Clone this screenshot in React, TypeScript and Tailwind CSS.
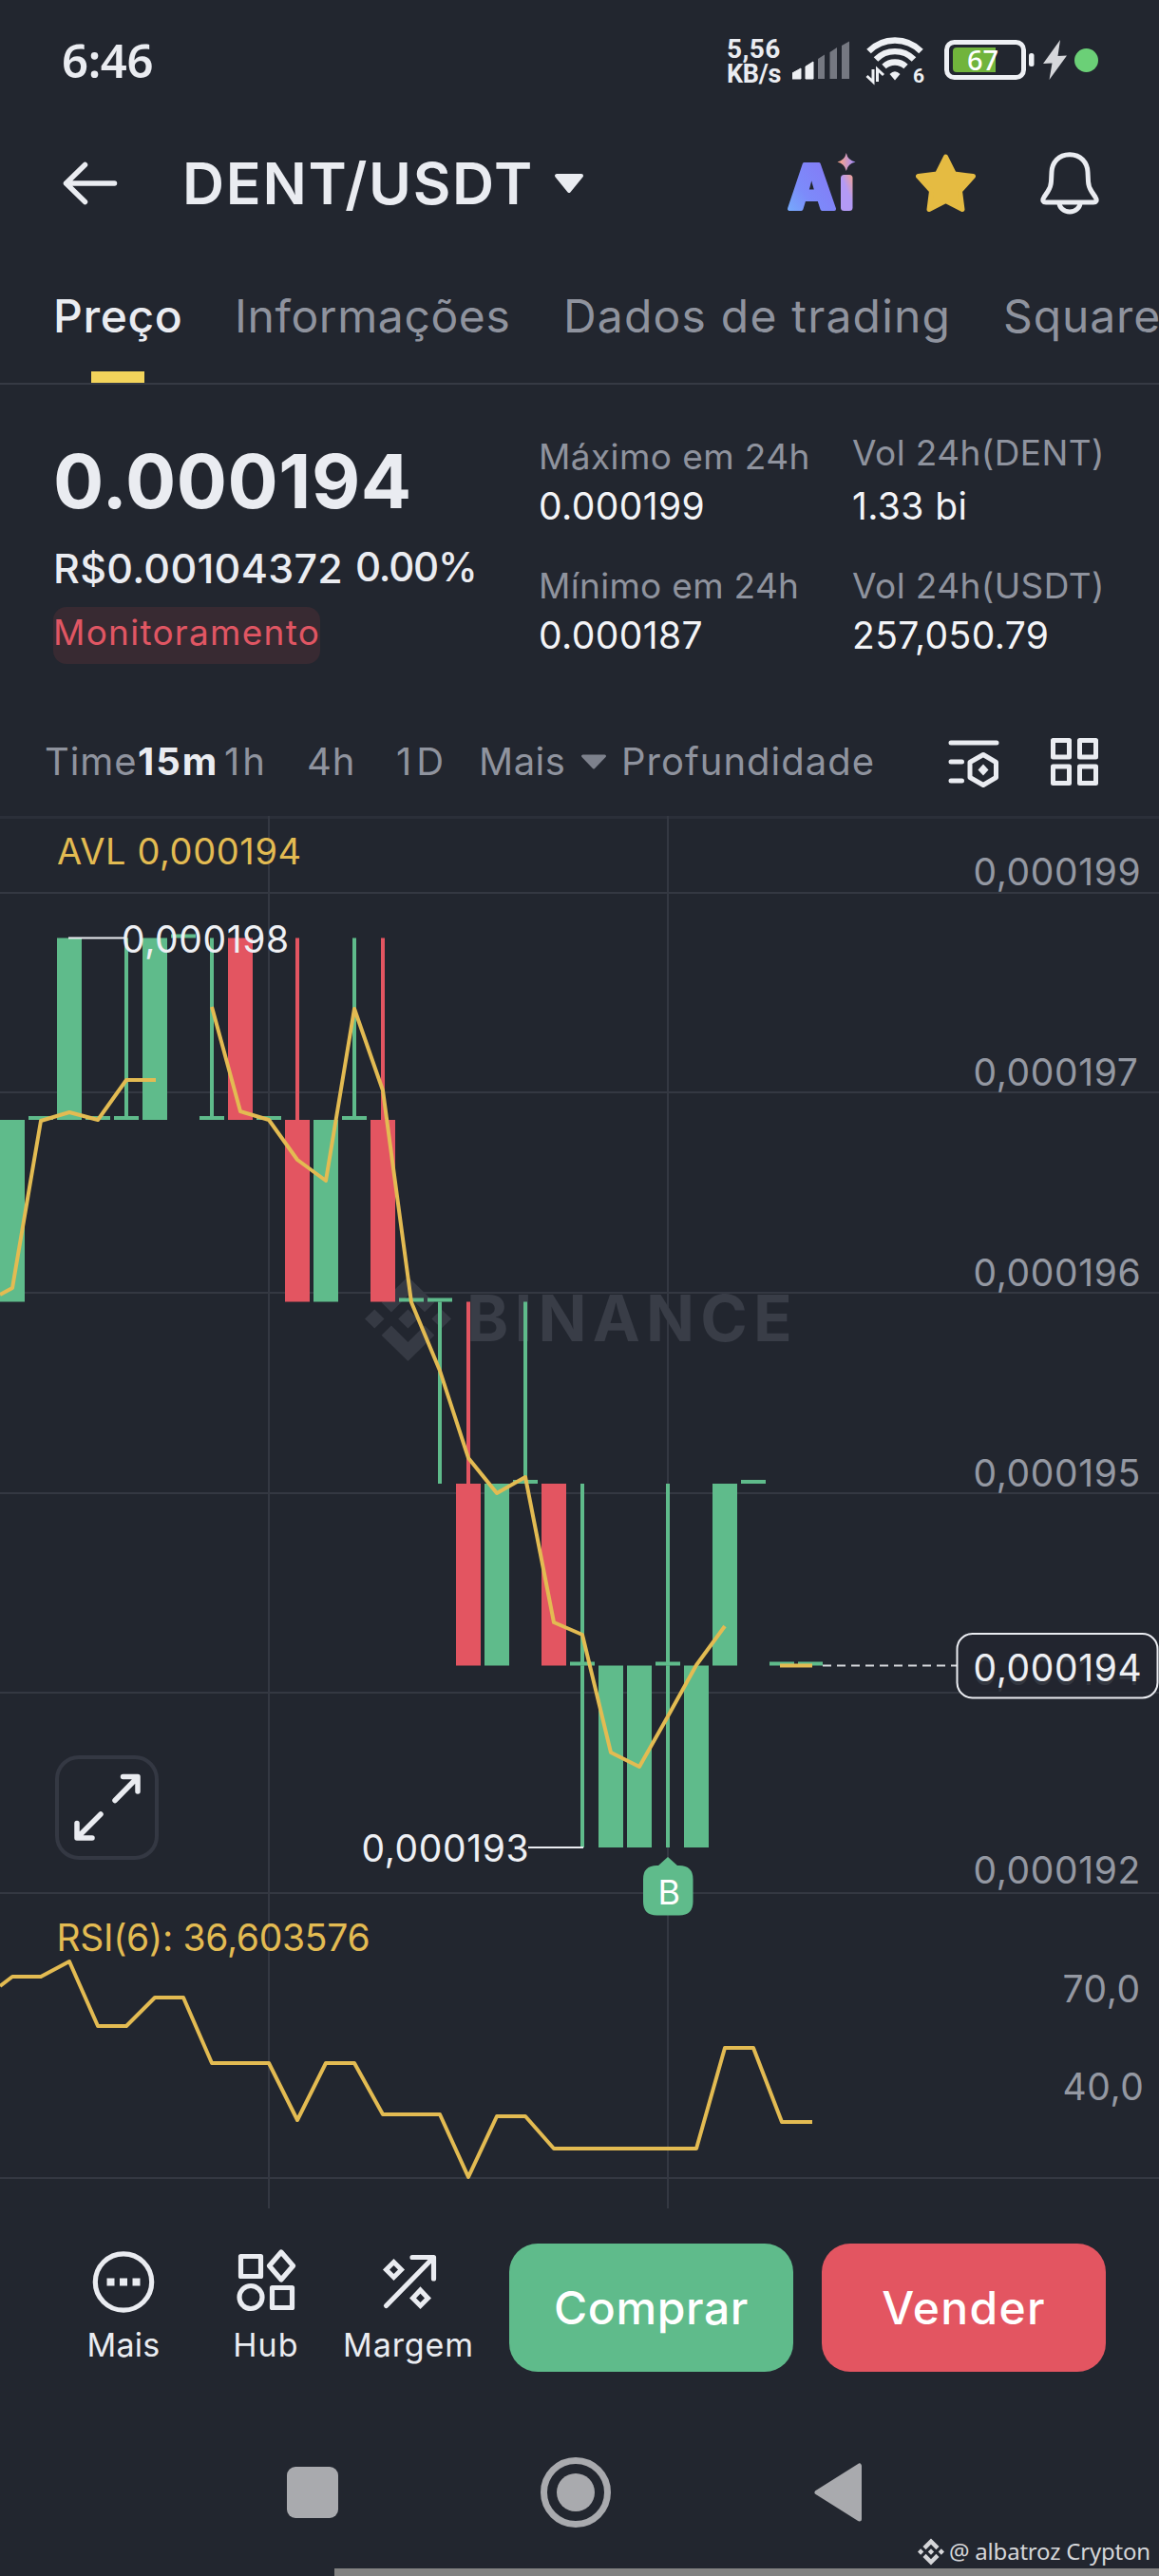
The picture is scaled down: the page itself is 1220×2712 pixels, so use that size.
import type { ReactNode } from 'react'
import { clsx } from 'clsx'

const UP = '#5fbb8b'
const DOWN = '#e35561'
const AVG = '#e3bb52'
const GRID = '#343842'

const LOGO_PATH =
    'M16.624 13.9202l2.7175 2.7154-7.353 7.353-7.353-7.352 2.7175-2.7164 4.6355 4.6595 4.6356-4.6595zm4.6366-4.6366L24 12l-2.7154 2.7164L18.5682 12l2.6924-2.7164zm-9.272.001l2.7163 2.6914-2.7164 2.7174v-.001L9.2721 12l2.7164-2.7154zm-9.2722-.001L5.4088 12l-2.6914 2.6924L0 12l2.7164-2.7164zM11.9885.0115l7.353 7.329-2.7174 2.7154-4.6356-4.6356-4.6355 4.6595-2.7174-2.7154 7.353-7.353z'

interface Candle {
    open: number
    close: number
    high?: number
    low?: number
}

// Prices in millionths, oldest first, one candle every 15 minutes
const candles: Candle[] = [
    { open: 196, close: 197 },
    { open: 197, close: 197 },
    { open: 197, close: 198 },
    { open: 197, close: 197 },
    { open: 197, close: 197, high: 198 },
    { open: 197, close: 198 },
    { open: 198, close: 198 },
    { open: 197, close: 197, high: 198 },
    { open: 198, close: 197 },
    { open: 197, close: 197 },
    { open: 197, close: 196, high: 198 },
    { open: 196, close: 197 },
    { open: 197, close: 197, high: 198 },
    { open: 197, close: 196, high: 198 },
    { open: 196, close: 196 },
    { open: 196, close: 196, low: 195 },
    { open: 195, close: 194, high: 196 },
    { open: 194, close: 195 },
    { open: 195, close: 195, high: 196 },
    { open: 195, close: 194 },
    { open: 194, close: 194, high: 195, low: 193 },
    { open: 193, close: 194 },
    { open: 193, close: 194 },
    { open: 194, close: 194, high: 195, low: 193 },
    { open: 193, close: 194 },
    { open: 194, close: 195 },
    { open: 195, close: 195 },
    { open: 194, close: 194 },
    { open: 194, close: 194 },
]

const candleX = (i: number) => 13 + i * 30
const priceY = (p: number) => 128.5 + (198 - p) * 191.5

const avgLines = [
    '0,504 13,497 43,321 73,312 103,320 133,278 164,278',
    '223,201 253,311 283,320 313,362 343,384 373,203 403,289 433,512 463,584 493,676 523,713 553,696 583,849 613,862 643,986 673,1001 703,948 733,894 763,853',
    '821,894.5 855,894.5',
]

const rsiLine =
    '0,1232 13,1222 43,1222 73,1206 103,1274 133,1274 163,1244 193,1244 223,1313 283,1313 313,1373 343,1313 373,1313 403,1367 463,1367 493,1433 523,1369 553,1369 583,1403 733,1403 763,1297 793,1297 823,1375 855,1375'

const gridRows = [81, 291, 502, 713, 923, 1134, 1434]

const axisLabels = [
    { text: '0,000199', x: 1024.5, y: 73 },
    { text: '0,000197', x: 1024.5, y: 284 },
    { text: '0,000196', x: 1024.5, y: 495 },
    { text: '0,000195', x: 1024.5, y: 705.5 },
    { text: '0,000194', x: 1024.5, y: 915 },
    { text: '0,000192', x: 1024.5, y: 1123.5 },
    { text: '70,0', x: 1118.5, y: 1248.5 },
    { text: '40,0', x: 1118.5, y: 1352 },
]

function StatusBar() {
    return (
        <div className="flex h-[126px] items-center justify-between pr-[64px] pl-[65px]">
            <span className="font-['Noto_Sans'] text-[49px] leading-none font-semibold tracking-[-0.4px]">6:46</span>
            <div className="flex items-center">
                <div className="mr-[12px] w-[57px] pt-[3px] font-['Roboto'] text-[28px] leading-[26px] font-bold whitespace-nowrap">
                    <div className="tracking-[0.4px]">5,56</div>
                    <div className="text-[27px] tracking-[-0.3px]">KB/s</div>
                </div>
                <svg width="60" height="42" viewBox="0 0 60 42" className="mr-[17px]">
                    <path d="M0 41V35L9 30V41ZM14 41V28L22 23V41Z" fill="#eef0f4" stroke="#eef0f4" strokeLinejoin="round" />
                    <path d="M27 41V20L34 15.500V41ZM39.500 41V13L47 8V41ZM52 41V6L60 1.500V41Z" fill="#757881" />
                </svg>
                <svg width="63" height="50" viewBox="0 0 63 50" className="mr-[20px] overflow-visible" fill="none" stroke="#eef0f4">
                    <path d="M3.500 16A38.500 38.500 0 0 1 58.500 16M11 24.500A28 28 0 0 1 51 24.500M19.500 32A17 17 0 0 1 42.500 32" strokeWidth="6.400" />
                    <path d="M25.500 40Q31 34.500 36.500 40L31 46.500Z" fill="#eef0f4" stroke="none" />
                    <path d="M8 35V48L1.500 42M12.500 48V35L19 41" strokeWidth="3" />
                    <text x="50" y="48.500" className="fill-[#eef0f4] font-['Roboto'] text-[21px] font-bold" stroke="none">6</text>
                </svg>
                <svg width="95" height="42" viewBox="0 0 95 42" className="mr-[9px]">
                    <rect x="2.500" y="2.500" width="81" height="37" rx="8" fill="none" stroke="#eef0f4" strokeWidth="5" />
                    <path d="M13 8H54V34H13Q9 34 9 30V12Q9 8 13 8Z" fill="#71b43c" />
                    <rect x="89" y="14" width="5.500" height="14" rx="2.500" fill="#eef0f4" />
                    <text x="24" y="32" className="fill-white font-['Noto_Sans'] text-[29px] font-medium">67</text>
                </svg>
                <svg width="26" height="42" viewBox="0 0 26 42" className="mr-[7px]">
                    <path d="M18 0L0 25L9.500 24.500L6.500 42L25 16.500L15.500 17Z" fill="#d6d7db" />
                </svg>
                <span className="size-[25px] rounded-full bg-[#6bd077]" />
            </div>
        </div>
    )
}

function Header() {
    return (
        <header className="flex h-[134px] items-center pr-[63px] pl-[65px]">
            <svg width="60" height="46" viewBox="0 0 60 46" fill="none" stroke="#eaecf1" strokeWidth="5.500" strokeLinecap="round" strokeLinejoin="round">
                <path d="M24.500 3.500L4.500 23L24.500 42.500M4.500 23H55.500" />
            </svg>
            <h1 className="ml-[67px] text-[61px] leading-none font-semibold tracking-[1.7px]">DENT/USDT</h1>
            <svg width="34" height="24" viewBox="0 0 34 24" className="ml-[20px]">
                <path d="M4 4H30L17 20Z" fill="#eaecf1" stroke="#eaecf1" strokeWidth="4" strokeLinejoin="round" />
            </svg>
            <div className="ml-auto flex items-center">
                <svg width="76" height="66" viewBox="0 0 76 66" className="overflow-visible">
                    <defs>
                        <linearGradient id="ai-a" x1="0" y1="1" x2="0.700" y2="0.200">
                            <stop offset="0" stopColor="#74b4fb" />
                            <stop offset="0.500" stopColor="#7c8bfa" />
                            <stop offset="1" stopColor="#837df6" />
                        </linearGradient>
                        <linearGradient id="ai-i" x1="1" y1="0" x2="0.600" y2="0.500">
                            <stop offset="0" stopColor="#f2a294" />
                            <stop offset="1" stopColor="#b39af5" />
                        </linearGradient>
                        <linearGradient id="ai-s" x1="0" y1="0.500" x2="1" y2="0.500">
                            <stop offset="0.200" stopColor="#f0a193" />
                            <stop offset="0.900" stopColor="#a98ff6" />
                        </linearGradient>
                    </defs>
                    <text x="1.500" y="60" fill="url(#ai-a)" stroke="url(#ai-a)" strokeWidth="4" strokeLinejoin="round" className="text-[65px] font-extrabold">A</text>
                    <rect x="57" y="24" width="12.500" height="38" rx="3.500" fill="url(#ai-i)" />
                    <path d="M62.800 1Q64.500 9 72.500 10.500Q64.500 12 62.800 20Q61 12 53.500 10.500Q61 9 62.800 1Z" fill="url(#ai-s)" />
                </svg>
                <svg width="64" height="62" viewBox="0 0 64 62" className="ml-[60px]">
                    <path
                        d="M31.500 3L40.500 21L60.500 23.500L46.500 39L49 58.500L31.500 49.500L14 58.500L16.500 39L2.500 23.500L22.500 21Z"
                        fill="#e5bb42"
                        stroke="#e5bb42"
                        strokeWidth="5"
                        strokeLinejoin="round"
                    />
                </svg>
                <svg width="62" height="66" viewBox="0 0 62 66" className="ml-[67px]" fill="none" stroke="#eaecf1" strokeWidth="5" strokeLinejoin="round">
                    <path d="M31 2.800C19 2.800 12.500 11.500 12 21L11.500 31C11.300 36 10 38.500 8 41.500L4 47.500C1.500 51.500 3.500 53 6 53H56C58.500 53 60.500 51.500 58 47.500L54 41.500C52 38.500 50.700 36 50.500 31L50 21C49.500 11.500 43 2.800 31 2.800Z" />
                    <path d="M20 53.500A11 9.500 0 0 0 42 53.500" />
                </svg>
            </div>
        </header>
    )
}

function Tabs() {
    return (
        <nav className="flex h-[145px] overflow-hidden border-b-2 border-[#363a44] pl-[56px] text-[48px] leading-[48px] whitespace-nowrap text-[#8f939e]">
            <div className="flex w-[191px] shrink-0 flex-col justify-between pt-[49px]">
                <span className="font-medium tracking-[0.6px] text-[#eaecf1]">Preço</span>
                <span className="ml-[40px] h-[12px] w-[56px] bg-[#f3d45b]" />
            </div>
            <span className="w-[346px] shrink-0 pt-[49px] tracking-[0.6px]">Informações</span>
            <span className="w-[463px] shrink-0 pt-[49px] tracking-[1.2px]">Dados de trading</span>
            <span className="shrink-0 pt-[49px] tracking-[0.9px]">Square</span>
        </nav>
    )
}

function Stat({ label, value, className }: { label: string; value: string; className?: string }) {
    return (
        <div>
            <div className={clsx('text-[37px] leading-[40px] text-[#8f939e]', className)}>{label}</div>
            <div className="mt-[12px] text-[39px] leading-[40px] tracking-[0.4px] text-[#f3f4f7]">{value}</div>
        </div>
    )
}

function Quote() {
    return (
        <section className="flex h-[340px] pl-[56px] whitespace-nowrap">
            <div className="w-[511px] pt-[62px]">
                <div className="text-[79px] leading-[79px] font-bold tracking-[0.5px]">0.000194</div>
                <div className="mt-[31px] flex text-[43px] leading-[43px] font-medium">
                    <span className="w-[318px] tracking-[0.3px]">R$0.00104372</span>
                    <span className="-mt-[2px] text-[42px] tracking-[-1.2px]">0.00%</span>
                </div>
                <div className="mt-[19px] h-[60px] w-[281px] rounded-[14px] bg-[#382a32] text-[37px] leading-[54px] tracking-[1.25px] text-[#e05663]">
                    Monitoramento
                </div>
            </div>
            <div className="flex w-[330px] flex-col gap-[44px] pt-[56px]">
                <Stat label="Máximo em 24h" value="0.000199" className="tracking-[0.4px]" />
                <Stat label="Mínimo em 24h" value="0.000187" className="tracking-[0.3px]" />
            </div>
            <div className="flex flex-col gap-[44px] pt-[56px]">
                <Stat label="Vol 24h(DENT)" value="1.33 bi" className="-mt-[4px] mb-[16px] tracking-[0.4px]" />
                <Stat label="Vol 24h(USDT)" value="257,050.79" className="tracking-[0.4px]" />
            </div>
        </section>
    )
}

const intervals = [
    { label: 'Time', className: 'w-[98px] tracking-[0.9px]' },
    { label: '15m', className: 'w-[91px] font-bold tracking-[2px] text-[#eaecf1]' },
    { label: '1h', className: 'w-[87px] tracking-[3px]' },
    { label: '4h', className: 'w-[94px] tracking-[1px]' },
    { label: '1D', className: 'w-[87px] tracking-[5px]' },
    { label: 'Mais', className: 'w-[106px] tracking-[0.5px]' },
]

function Intervals() {
    return (
        <div className="flex h-[114px] items-center pl-[47px] text-[40px] leading-none whitespace-nowrap text-[#8f939e]">
            {intervals.map(({ label, className }) => (
                <span key={label} className={clsx('shrink-0', className)}>
                    {label}
                </span>
            ))}
            <svg width="30" height="18" viewBox="0 0 30 18">
                <path d="M3.500 3H26.500L15 15Z" fill="#7d818c" stroke="#7d818c" strokeWidth="3" strokeLinejoin="round" />
            </svg>
            <span className="ml-[14px] tracking-[1px]">Profundidade</span>
            <svg width="54" height="54" viewBox="0 0 54 54" className="mt-[1px] ml-[77px]" fill="none" stroke="#eaecf1" strokeWidth="5">
                <path d="M3 6H51M3 26H14.500M3 46H14.500" strokeLinecap="round" />
                <path d="M37 18.500L50.500 26.500V42.500L37 50.500L23 42.500V26.500Z" strokeLinejoin="round" />
                <path d="M37 28.500L42.500 34.500L37 40.500L31.500 34.500Z" fill="#eaecf1" stroke="none" />
            </svg>
            <svg width="50" height="50" viewBox="0 0 50 50" className="ml-[54px]" fill="none" stroke="#eaecf1" strokeWidth="5" strokeLinejoin="round">
                <path d="M2.500 2.500H19.500V20H2.500ZM30.500 2.500H47.500V20H30.500ZM2.500 30H19.500V47.500H2.500ZM30.500 30H47.500V47.500H30.500Z" />
            </svg>
        </div>
    )
}

function CandleMark({ candle, x }: { candle: Candle; x: number }) {
    const { open, close, high, low } = candle
    const color = close < open ? DOWN : UP
    const top = priceY(Math.max(open, close))
    const bottom = priceY(Math.min(open, close))
    return (
        <g fill={color}>
            {high && <rect x={x - 2} y={priceY(high)} width={4} height={top - priceY(high)} />}
            {low && <rect x={x - 2} y={bottom} width={4} height={priceY(low) - bottom} />}
            {open === close ? (
                <rect x={x - 13} y={top - 4} width={26} height={4} />
            ) : (
                <rect x={x - 13} y={top} width={26} height={bottom - top} />
            )}
        </g>
    )
}

function Chart() {
    return (
        <div className="relative">
            <svg width="1220" height="1466" viewBox="0 0 1220 1466" className="block text-[39px] tracking-[0.6px]">
                <rect width="1220" height="3" fill="#2b2f39" />
                {gridRows.map(y => (
                    <rect key={y} y={y - 1} width="1220" height="2" fill={GRID} />
                ))}
                <rect x="282" width="2" height="1466" fill={GRID} />
                <rect x="702" width="2" height="1466" fill={GRID} />

                <svg x="384" y="485" width="91" height="89" viewBox="0 0 24 24" preserveAspectRatio="none">
                    <path d={LOGO_PATH} fill="#363a44" />
                </svg>
                <text x="491" y="553" className="fill-[#393d47] text-[67px] font-bold tracking-[6.2px]">BINANCE</text>

                {candles.map((candle, i) => (
                    <CandleMark key={i} candle={candle} x={candleX(i)} />
                ))}
                {[...avgLines, rsiLine].map(points => (
                    <polyline key={points} points={points} fill="none" stroke={AVG} strokeWidth="4" strokeLinejoin="round" />
                ))}

                {axisLabels.map(({ text, x, y }) => (
                    <text key={text} x={x} y={y} className="fill-[#9498a2]">{text}</text>
                ))}

                <path d="M866 894.500H1007" stroke="#d4d6db" strokeWidth="2" strokeDasharray="9 6" />
                <rect x="1007.500" y="861" width="211" height="67.500" rx="16" fill="#22262f" fillOpacity="0.850" stroke="#eaecf1" strokeWidth="2" />
                <text x="1024.500" y="910.500" className="fill-[#eef0f4]">0,000194</text>

                <path d="M72 128.500H131" stroke="#eaecf1" strokeWidth="2" />
                <text x="128" y="144" className="fill-[#eef0f4]">0,000198</text>
                <path d="M556 1086H614" stroke="#eaecf1" strokeWidth="2" />
                <text x="380.500" y="1101" className="fill-[#eef0f4]">0,000193</text>

                <text x="60" y="51" className="fill-[#e3bb52] text-[38px]">AVL 0,000194</text>
                <text x="59.500" y="1194.500" className="fill-[#e3bb52] tracking-[-0.3px]">RSI(6): 36,603576</text>

                <path d="M703 1096L713 1105H715Q729.500 1105 729.500 1119.500V1143Q729.500 1157.500 715 1157.500H691.500Q677 1157.500 677 1143V1119.500Q677 1105 691.500 1105H693Z" fill={UP} />
                <text x="692.500" y="1146" className="fill-white text-[36px] tracking-normal">B</text>
            </svg>
            <button className="absolute top-[989px] left-[58px] flex h-[110px] w-[109px] items-center justify-center rounded-[25px] border-4 border-[#343843]">
                <svg width="74" height="74" viewBox="0 0 74 74" fill="none" stroke="#eaecf1" strokeWidth="5.500" strokeLinecap="round" strokeLinejoin="round">
                    <path d="M45 29.500L68.500 5.500M53.500 4.500H69V20" />
                    <path d="M30 44L6 68M5 53.500V69H21" />
                </svg>
            </button>
        </div>
    )
}

function Action({ label, className, children }: { label: string; className?: string; children: ReactNode }) {
    return (
        <button className="flex w-[150px] flex-col items-center">
            <svg width="76" height="76" viewBox="0 0 76 76" className="mt-[2px]" fill="none" stroke="#eaecf1" strokeWidth="5.200" strokeLinejoin="round">
                {children}
            </svg>
            <span className={clsx('mt-[9px] text-[34px] leading-[40px]', className)}>{label}</span>
        </button>
    )
}

function ActionBar() {
    return (
        <div className="flex h-[172px] pt-[37px] pl-[55px]">
            <Action label="Mais" className="tracking-[0.3px]">
                <circle cx="38" cy="38.500" r="29.700" />
                <path d="M20.500 34.500H28.500V42.500H20.500ZM34 34.500H42V42.500H34ZM47.500 34.500H55.500V42.500H47.500Z" fill="#eaecf1" stroke="none" />
            </Action>
            <Action label="Hub" className="tracking-[1.1px]">
                <path d="M11.500 11.500H32.500V32.500H11.500ZM44.500 44.500H65.500V65.500H44.500ZM54 7L66.500 21.500L54 36L41.500 21.500Z" />
                <circle cx="22" cy="54.500" r="12" />
            </Action>
            <Action label="Margem" className="tracking-[0.9px]">
                <path d="M14.500 63.500L63 14M42 12.500H64.500V35" strokeLinecap="round" />
                <path d="M22.500 17.500L30.500 25.500L22.500 33.500L14.500 25.500ZM50.500 47L58.500 55.500L50.500 63.500L42.500 55.500Z" strokeLinejoin="miter" strokeWidth="5" />
            </Action>
            <button className="ml-[31px] h-[135px] w-[299px] rounded-[30px] bg-[#5fbb8b] text-[48px] leading-none font-medium tracking-[0.6px] text-white">Comprar</button>
            <button className="ml-[30px] h-[135px] w-[299px] rounded-[30px] bg-[#e35561] text-[48px] leading-none font-medium tracking-[1.3px] text-white">Vender</button>
        </div>
    )
}

function SystemNav() {
    return (
        <footer className="relative">
            <div className="flex h-[207px] items-center pt-[46px] pl-[302px]">
                <span className="size-[54px] rounded-[9px] bg-[#a9aaae]" />
                <span className="ml-[213px] flex size-[74px] items-center justify-center rounded-full border-[7px] border-[#a9aaae]">
                    <span className="size-[40px] rounded-full bg-[#a9aaae]" />
                </span>
                <svg width="50" height="62" viewBox="0 0 50 62" className="ml-[214px]">
                    <path d="M47.500 3V59L3 31Z" fill="#a9aaae" stroke="#a9aaae" strokeWidth="5" strokeLinejoin="round" />
                </svg>
            </div>
            <div className="ml-[352px] h-[8px] bg-[#828282]" />
            <div className="absolute right-[9px] bottom-[10px] flex items-center gap-[5px] font-['Noto_Sans'] text-[24px] leading-[32px] whitespace-nowrap text-[#d5d6d9]">
                <svg width="28" height="29" viewBox="0 0 24 24">
                    <path d={LOGO_PATH} fill="#d5d6d9" />
                </svg>
                <span className="tracking-[-0.2px]">@ albatroz Crypton</span>
            </div>
        </footer>
    )
}

export default function App() {
    return (
        <div className="h-[2712px] w-[1220px] overflow-hidden bg-[#22262f] font-['Inter',sans-serif] text-[#eaecf1]">
            <StatusBar />
            <Header />
            <Tabs />
            <Quote />
            <Intervals />
            <Chart />
            <ActionBar />
            <SystemNav />
        </div>
    )
}
